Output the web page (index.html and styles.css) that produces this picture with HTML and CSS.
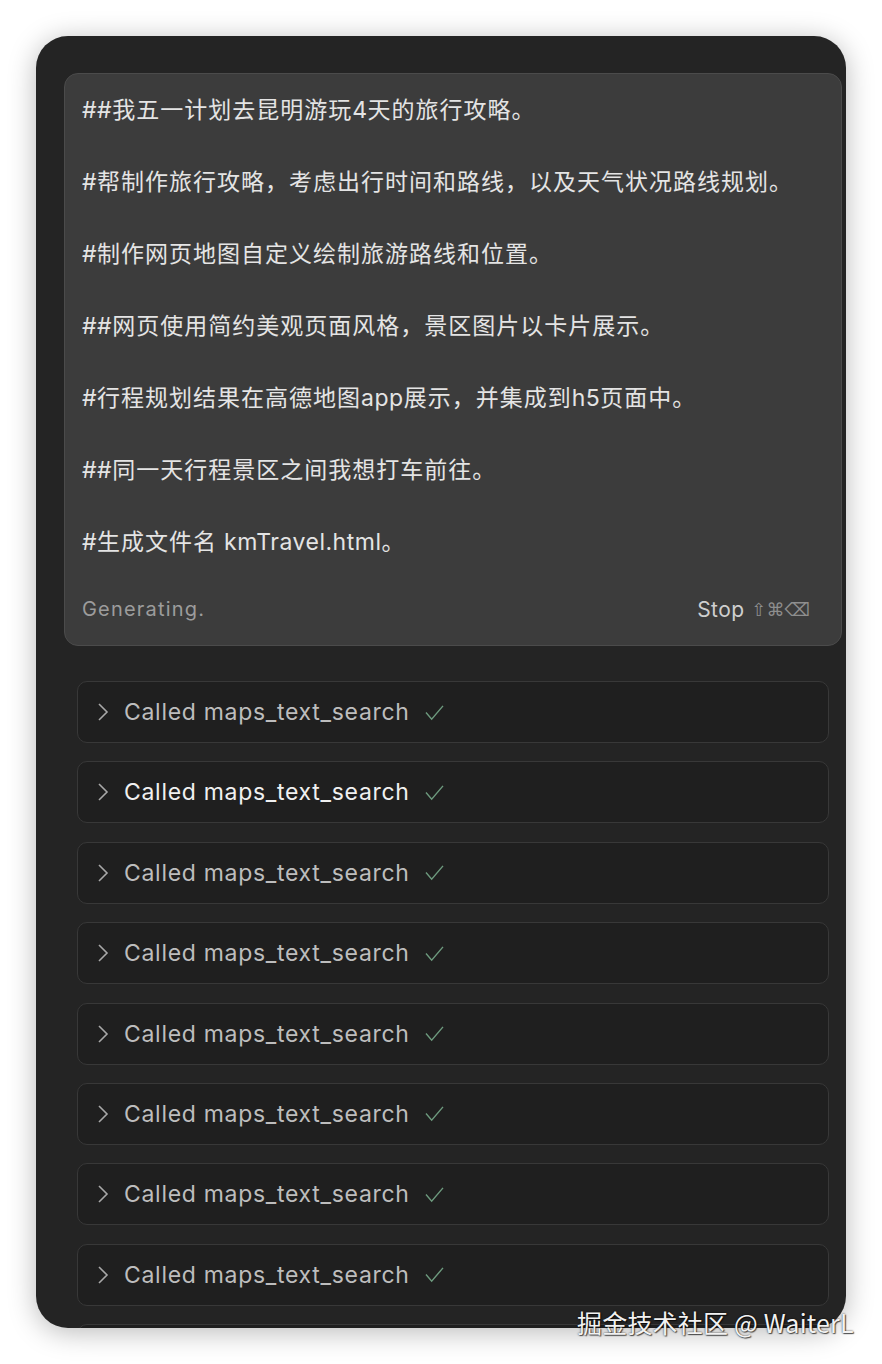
FILE: index.html
```html
<!DOCTYPE html>
<html lang="zh">
<head>
<meta charset="utf-8">
<link rel="stylesheet" href="styles.css">
</head>
<body>
<div class="panel">
  <div class="composer">
    <div class="prompt">
      <p><span class="lat">##</span>我五一计划去昆明游玩<span class="lat">4</span>天的旅行攻略。</p>
      <p class="blank">&nbsp;</p>
      <p><span class="lat">#</span>帮制作旅行攻略，考虑出行时间和路线，以及天气状况路线规划。</p>
      <p class="blank">&nbsp;</p>
      <p><span class="lat">#</span>制作网页地图自定义绘制旅游路线和位置。</p>
      <p class="blank">&nbsp;</p>
      <p><span class="lat">##</span>网页使用简约美观页面风格，景区图片以卡片展示。</p>
      <p class="blank">&nbsp;</p>
      <p><span class="lat">#</span>行程规划结果在高德地图<span class="lat">app</span>展示，并集成到<span class="lat">h5</span>页面中。</p>
      <p class="blank">&nbsp;</p>
      <p><span class="lat">##</span>同一天行程景区之间我想打车前往。</p>
      <p class="blank">&nbsp;</p>
      <p><span class="lat">#</span>生成文件名<span class="lat"> kmTravel.html</span>。</p>
    </div>
    <div class="composer-foot">
      <span class="status">Generating.</span>
      <span class="stop">Stop <span class="keys">⇧⌘⌫</span></span>
    </div>
  </div>
  <div class="calls">
    <div class="call"><svg class="chev" viewBox="0 0 12 20"><polyline points="2,2 10,10 2,18"/></svg><span class="label">Called maps_text_search</span><svg class="check" viewBox="0 0 22 18"><polyline points="2,9 8,16 20,2"/></svg></div>
    <div class="call active"><svg class="chev" viewBox="0 0 12 20"><polyline points="2,2 10,10 2,18"/></svg><span class="label">Called maps_text_search</span><svg class="check" viewBox="0 0 22 18"><polyline points="2,9 8,16 20,2"/></svg></div>
    <div class="call"><svg class="chev" viewBox="0 0 12 20"><polyline points="2,2 10,10 2,18"/></svg><span class="label">Called maps_text_search</span><svg class="check" viewBox="0 0 22 18"><polyline points="2,9 8,16 20,2"/></svg></div>
    <div class="call"><svg class="chev" viewBox="0 0 12 20"><polyline points="2,2 10,10 2,18"/></svg><span class="label">Called maps_text_search</span><svg class="check" viewBox="0 0 22 18"><polyline points="2,9 8,16 20,2"/></svg></div>
    <div class="call"><svg class="chev" viewBox="0 0 12 20"><polyline points="2,2 10,10 2,18"/></svg><span class="label">Called maps_text_search</span><svg class="check" viewBox="0 0 22 18"><polyline points="2,9 8,16 20,2"/></svg></div>
    <div class="call"><svg class="chev" viewBox="0 0 12 20"><polyline points="2,2 10,10 2,18"/></svg><span class="label">Called maps_text_search</span><svg class="check" viewBox="0 0 22 18"><polyline points="2,9 8,16 20,2"/></svg></div>
    <div class="call"><svg class="chev" viewBox="0 0 12 20"><polyline points="2,2 10,10 2,18"/></svg><span class="label">Called maps_text_search</span><svg class="check" viewBox="0 0 22 18"><polyline points="2,9 8,16 20,2"/></svg></div>
    <div class="call"><svg class="chev" viewBox="0 0 12 20"><polyline points="2,2 10,10 2,18"/></svg><span class="label">Called maps_text_search</span><svg class="check" viewBox="0 0 22 18"><polyline points="2,9 8,16 20,2"/></svg></div>
    <div class="call"></div>
  </div>
</div>
<div class="watermark">掘金技术社区 @ WaiterL</div>
</body>
</html>
```
FILE: styles.css
```css
html, body {
  margin: 0;
  padding: 0;
  background: #ffffff;
}
body {
  padding: 36px 0 0 36px;
  width: 882px;
  height: 1364px;
  box-sizing: border-box;
  position: relative;
  overflow: hidden;
  font-family: Inter, "Noto Sans CJK SC", sans-serif;
}
.panel {
  width: 810px;
  height: 1292px;
  box-sizing: border-box;
  background: #242424;
  border-radius: 32px;
  box-shadow: 0 4px 28px rgba(0, 0, 0, 0.28);
  overflow: hidden;
  padding: 37px 4px 0 28px;
}
.composer {
  background: #3c3c3c;
  border: 1px solid #4b4b4b;
  border-radius: 14px;
  padding: 18px 18px 20px 17px;
  height: 573px;
  box-sizing: border-box;
}
.prompt p {
  margin: 0;
  font-family: Inter, "Noto Sans CJK SC", sans-serif;
  font-size: 23px;
  letter-spacing: 1px;
  line-height: 36px;
  color: #e4e4e4;
  white-space: nowrap;
}
.prompt .lat {
  letter-spacing: 0.5px;
}
.composer-foot {
  margin-top: 34px;
  display: flex;
  justify-content: space-between;
  align-items: center;
  height: 30px;
  padding-right: 13px;
}
.status {
  font-size: 20px;
  color: #9c9c9c;
  letter-spacing: 1.2px;
}
.stop {
  font-size: 21px;
  color: #cfcfcf;
  letter-spacing: 0.4px;
  display: flex;
  align-items: center;
  gap: 7px;
}
.keys {
  font-family: "DejaVu Sans", sans-serif;
  font-size: 18px;
  color: #8e8e8e;
  letter-spacing: 0;
}
.calls {
  margin-top: 35px;
  padding: 0 13px;
  display: flex;
  flex-direction: column;
  gap: 18.4px;
}
.call {
  height: 62px;
  flex-shrink: 0;
  box-sizing: border-box;
  background: #1f1f1f;
  border: 1.5px solid #383838;
  border-radius: 10px;
  display: flex;
  align-items: center;
  padding-left: 19px;
}
.chev {
  width: 12px;
  height: 20px;
  fill: none;
  stroke: #a8a8a8;
  stroke-width: 1.6;
  margin-right: 15px;
}
.label {
  font-size: 23px;
  color: #bdbdbd;
  letter-spacing: 0.7px;
}
.call.active .label {
  color: #f0f0f0;
}
.check {
  width: 21px;
  height: 17px;
  fill: none;
  stroke: #6d9a7e;
  stroke-width: 1.5;
  margin-left: 14px;
}
.watermark {
  position: absolute;
  left: 577px;
  top: 1304px;
  font-family: "Noto Sans CJK SC", sans-serif;
  font-size: 25px;
  letter-spacing: 0.2px;
  color: #f2f2f2;
  text-shadow: 0 0 2px rgba(0, 0, 0, 0.8), 1px 1px 1px rgba(0, 0, 0, 0.6);
  white-space: nowrap;
}
```
